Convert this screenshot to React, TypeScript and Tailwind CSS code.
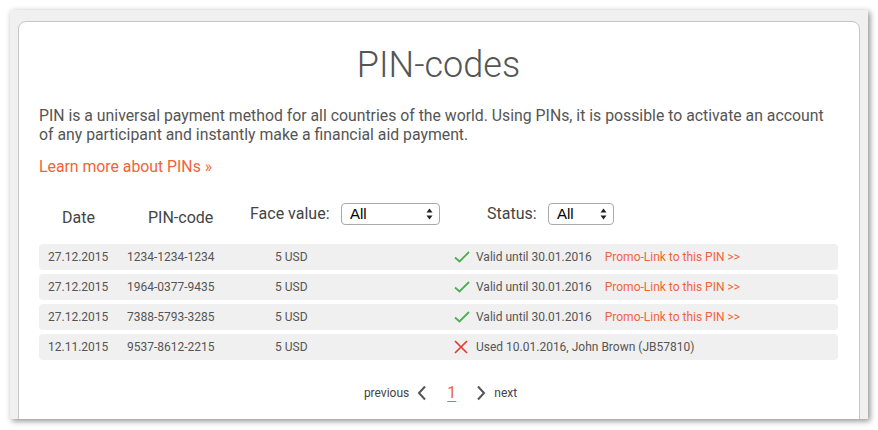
import React from 'react'

type Pin = {
  date: string
  code: string
  value: string
  used?: string
}

const pins: Pin[] = [
  { date: '27.12.2015', code: '1234-1234-1234', value: '5 USD' },
  { date: '27.12.2015', code: '1964-0377-9435', value: '5 USD' },
  { date: '27.12.2015', code: '7388-5793-3285', value: '5 USD' },
  { date: '12.11.2015', code: '9537-8612-2215', value: '5 USD', used: 'Used 10.01.2016, John Brown (JB57810)' },
]

const FakeSelect = ({ width }: { width: string }) => (
  <div
    className={`${width} h-[22px] flex items-center justify-between pl-[8px] pr-[6px] border border-[#a9a9a9] rounded-[4px] bg-white text-[15px] text-black`}
    style={{ fontFamily: '"Liberation Sans", Arial, sans-serif' }}
  >
    <span>All</span>
    <svg width="7" height="12" viewBox="0 0 7 12">
      <path d="M3.5 0.5 L6.5 4.5 L0.5 4.5 Z" fill="#222" />
      <path d="M3.5 11.5 L6.5 7.5 L0.5 7.5 Z" fill="#222" />
    </svg>
  </div>
)

const Check = () => (
  <svg width="16" height="12" viewBox="0 0 16 12" fill="none">
    <path d="M1 6.5 L5.5 10.5 L15 1" stroke="#4caf50" strokeWidth="1.8" />
  </svg>
)

const Cross = () => (
  <svg width="14" height="14" viewBox="0 0 14 14" fill="none">
    <path d="M1 1 L13 13 M13 1 L1 13" stroke="#e53935" strokeWidth="1.7" />
  </svg>
)

const Chevron = ({ dir }: { dir: 'left' | 'right' }) => (
  <svg width="10" height="16" viewBox="0 0 10 16" fill="none">
    <path
      d={dir === 'left' ? 'M8 1.5 L2 8 L8 14.5' : 'M2 1.5 L8 8 L2 14.5'}
      stroke="#555"
      strokeWidth="2"
    />
  </svg>
)

const App = () => {
  return (
    <div
      className="w-[878px] h-[430px] bg-white pt-[10px] pl-[10px]"
      style={{ fontFamily: 'Roboto, "Liberation Sans", sans-serif' }}
    >
      <div className="w-[858px] h-[409px] bg-[#f0f0f0] overflow-hidden pt-[11px] px-[8px] shadow-[2px_2px_6px_rgba(0,0,0,0.45)]">
        <div className="h-[420px] bg-white border border-[#c6c6c6] rounded-t-[8px] pl-[20px] pr-[21px]">
          <h1 className="text-center text-[36px] font-light text-[#555] leading-[42px] mt-[22px]">PIN-codes</h1>

          <p className="mt-[20px] text-[15.8px] leading-[19px] text-[#555]">
            PIN is a universal payment method for all countries of the world. Using PINs, it is possible to activate an account
            of any participant and instantly make a financial aid payment.
          </p>

          <a className="block mt-[13px] text-[15.8px] leading-[19px] text-[#f0643a]">Learn more about PINs »</a>

          <div className="flex items-center mt-[26px] h-[24px] text-[16px] text-[#444]">
            <span className="ml-[23px] w-[86px] mt-[8px]">Date</span>
            <span className="w-[102px] mt-[8px]">PIN-code</span>
            <span className="w-[91px]">Face value:</span>
            <FakeSelect width="w-[99px]" />
            <span className="ml-[47px] w-[61px]">Status:</span>
            <FakeSelect width="w-[66px]" />
          </div>

          <div className="mt-[18px] flex flex-col gap-[4px]">
            {pins.map((pin, i) => (
              <div key={i} className="flex items-center h-[26px] bg-[#f0f0f0] rounded-[4px] pl-[9px] text-[12px] text-[#555]">
                <span className="w-[79px]">{pin.date}</span>
                <span className="w-[148px]">{pin.code}</span>
                <span className="w-[179px]">{pin.value}</span>
                <span className="w-[22px] flex items-center">{pin.used ? <Cross /> : <Check />}</span>
                {pin.used ? (
                  <span>{pin.used}</span>
                ) : (
                  <>
                    <span>Valid until 30.01.2016</span>
                    <a className="ml-[13px] text-[#f0643a]">Promo-Link to this PIN &gt;&gt;</a>
                  </>
                )}
              </div>
            ))}
          </div>

          <div className="flex items-center justify-center mt-[21px] pl-[4px] text-[12px] text-[#444]">
            <span>previous</span>
            <span className="ml-[8px]"><Chevron dir="left" /></span>
            <a className="ml-[20px] text-[16px] text-[#f0643a] underline underline-offset-[3px]">1</a>
            <span className="ml-[20px]"><Chevron dir="right" /></span>
            <span className="ml-[8px]">next</span>
          </div>
        </div>
      </div>
    </div>
  )
}

export default App
